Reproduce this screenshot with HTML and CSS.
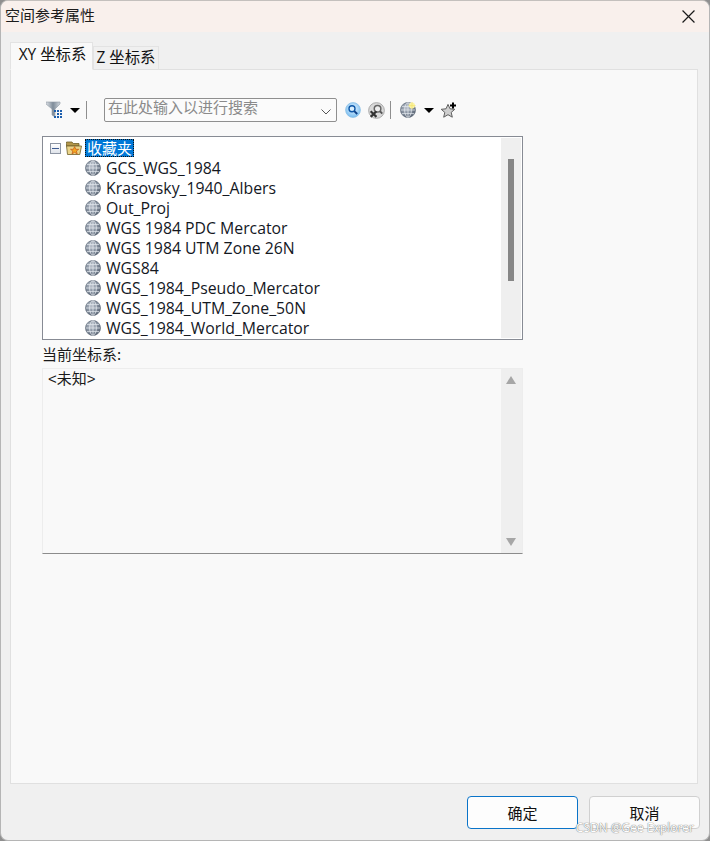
FILE: index.html
```html
<!DOCTYPE html>
<html lang="zh-CN">
<head>
<meta charset="utf-8">
<title>空间参考属性</title>
<link rel="stylesheet" href="styles.css">
</head>
<body>
<svg class="defs" width="0" height="0" aria-hidden="true">
  <defs>
    <radialGradient id="gb" cx="40%" cy="35%" r="70%">
      <stop offset="0" stop-color="#b9c0ca"/><stop offset="0.6" stop-color="#7f8a99"/><stop offset="1" stop-color="#525c6c"/>
    </radialGradient>
    <symbol id="globe" viewBox="0 0 16 16">
      <circle cx="8" cy="8" r="7.5" fill="url(#gb)" stroke="#6d7785" stroke-width="0.8"/>
      <g fill="none" stroke="#e6eaef" stroke-width="0.75">
        <ellipse cx="8" cy="8" rx="3.4" ry="7.2"/>
        <path d="M8 .8V15.2M.9 8H15.1M1.9 4.4H14.1M1.9 11.6H14.1"/>
      </g>
    </symbol>
  </defs>
</svg>
<div class="window">
  <header class="titlebar">
    <span class="title">空间参考属性</span>
    <svg class="close" viewBox="0 0 12 12"><path d="M.5.5 11.5 11.5M11.5.5.5 11.5" stroke="#1a1a1a" stroke-width="1.1" fill="none"/></svg>
  </header>
  <nav class="tabs">
    <div class="tab active">XY 坐标系</div>
    <div class="tab">Z 坐标系</div>
  </nav>
  <main class="panel">
    <div class="toolbar">
      <svg class="ico-filter" viewBox="0 0 16 18">
        <defs><linearGradient id="fn" x1="0" x2="1"><stop offset="0" stop-color="#dfe3e8"/><stop offset="0.5" stop-color="#7f8c99"/><stop offset="1" stop-color="#cfd5db"/></linearGradient></defs>
        <path d="M0 1H14V3L9 8V16L6 14V8L0 3Z" fill="url(#fn)" stroke="#8d98a2" stroke-width=".6"/>
        <path d="M8 9h2v2H8zM11 9h2v2h-2zM14 9h2v2h-2zM11 12h2v2h-2zM14 12h2v2h-2zM8 15h2v2H8zM11 15h2v2h-2zM14 15h2v2h-2z" fill="#1d5fae"/>
      </svg>
      <span class="caret caret-filter"></span>
      <span class="sep sep-a"></span>
      <div class="combo">
        <span class="placeholder">在此处输入以进行搜索</span>
        <svg class="chev" viewBox="0 0 10 6"><path d="M.5.5 5 5 9.5.5" fill="none" stroke="#555" stroke-width="1"/></svg>
      </div>
      <svg class="ico-search" viewBox="0 0 16 16">
        <defs><radialGradient id="sb" cx="50%" cy="40%" r="60%"><stop offset="0" stop-color="#e8f5ff"/><stop offset="1" stop-color="#79bdf0"/></radialGradient></defs>
        <circle cx="8" cy="8" r="7.4" fill="url(#sb)" stroke="#8cc0e6" stroke-width=".8"/>
        <circle cx="7" cy="6.8" r="3" fill="#d9eefc" stroke="#0e58a8" stroke-width="1.4"/>
        <path d="M9.3 9.1 12.2 12" stroke="#0e3f86" stroke-width="1.9"/>
      </svg>
      <svg class="ico-clear" viewBox="0 0 16 16">
        <circle cx="8" cy="8" r="7.4" fill="#d9d9d9" stroke="#9f9f9f" stroke-width=".8"/>
        <circle cx="9" cy="6.4" r="3.1" fill="#eee" stroke="#666" stroke-width="1.4"/>
        <path d="M11.4 8.9 13.4 11" stroke="#555" stroke-width="1.8"/>
        <path d="M2.5 8.6 8 14M8 8.6 2.5 14" stroke="#333" stroke-width="2"/>
      </svg>
      <span class="sep sep-b"></span>
      <svg class="ico-globe" viewBox="0 0 16 16">
        <use href="#globe"/>
        <circle cx="12" cy="3.6" r="3" fill="#fbf3a6"/>
        <path d="M12 0V7.2M8.4 3.6H15.6" stroke="#f4e46c" stroke-width=".7"/>
      </svg>
      <span class="caret caret-globe"></span>
      <svg class="ico-star" viewBox="0 0 16 16">
        <path d="M7 2.4 9 6.8 13.8 7.3 10.2 10.4 11.3 15.2 7 12.7 2.7 15.2 3.8 10.4.2 7.3 5 6.8Z" fill="#cfcfcf" stroke="#5f5f5f" stroke-width="1"/>
        <path d="M12 .5V6.5M9 3.5H15" stroke="#000" stroke-width="2"/>
      </svg>
    </div>

    <section class="tree">
      <div class="tree-list">
        <div class="row root">
          <span class="expander"><span class="minus"></span></span>
          <svg class="ico-folder" viewBox="0 0 16 14">
            <path d="M.5 2.5V1H6L7.2 2.5H13V5H.5Z" fill="#b3964a" stroke="#6e6028" stroke-width=".8"/>
            <path d="M.5 5H15.5L13.8 13.5H1.5Z" fill="#ead48a" stroke="#6e6028" stroke-width=".8"/>
            <path d="M8.6 5.6 9.8 8.3H12.7L10.4 10 11.2 13 8.6 11.3 6 13 6.8 10 4.5 8.3H7.4Z" fill="#f6a81f" stroke="#c2541a" stroke-width=".7"/>
          </svg>
          <span class="selected">收藏夹</span>
        </div>
        <div class="row item"><svg class="ico-item"><use href="#globe"/></svg><span>GCS_WGS_1984</span></div>
        <div class="row item"><svg class="ico-item"><use href="#globe"/></svg><span>Krasovsky_1940_Albers</span></div>
        <div class="row item"><svg class="ico-item"><use href="#globe"/></svg><span>Out_Proj</span></div>
        <div class="row item"><svg class="ico-item"><use href="#globe"/></svg><span>WGS 1984 PDC Mercator</span></div>
        <div class="row item"><svg class="ico-item"><use href="#globe"/></svg><span>WGS 1984 UTM Zone 26N</span></div>
        <div class="row item"><svg class="ico-item"><use href="#globe"/></svg><span>WGS84</span></div>
        <div class="row item"><svg class="ico-item"><use href="#globe"/></svg><span>WGS_1984_Pseudo_Mercator</span></div>
        <div class="row item"><svg class="ico-item"><use href="#globe"/></svg><span>WGS_1984_UTM_Zone_50N</span></div>
        <div class="row item"><svg class="ico-item"><use href="#globe"/></svg><span>WGS_1984_World_Mercator</span></div>
      </div>
      <div class="tree-scroll"><div class="thumb"></div></div>
    </section>

    <div class="label">当前坐标系:</div>

    <section class="info">
      <div class="info-text">&lt;未知&gt;</div>
      <div class="info-scroll">
        <span class="arrow up"></span>
        <span class="arrow down"></span>
      </div>
    </section>
  </main>
  <footer class="footer">
    <button class="btn primary" type="button">确定</button>
    <button class="btn" type="button">取消</button>
  </footer>
  <div class="watermark">CSDN @Gee Explorer</div>
</div>
</body>
</html>
```
FILE: styles.css
```css
* { box-sizing: border-box; }
html, body { margin: 0; padding: 0; height: 100%; background: #8f8f8f; }
body { font-family: "Open Sans", "Noto Sans CJK SC", sans-serif; font-size: 15px; color: #111; overflow: hidden; }
.defs { position: absolute; }

.window {
  position: relative;
  width: 710px;
  height: 841px;
  display: flex;
  flex-direction: column;
  background: #f0f0f0;
  border-radius: 8px;
  border: 1px solid #b5b5b5;
  border-top-color: #c4c0bd;
  overflow: hidden;
}

.titlebar {
  height: 31px;
  flex: none;
  background: #f9f0ec;
  display: flex;
  align-items: center;
  justify-content: space-between;
  padding: 0 14px 0 4px;
}
.title { font-family: "Noto Sans CJK SC", sans-serif; font-size: 15px; line-height: 26px; margin-bottom: 3px; color: #1c1c1c; }
.close { width: 13px; height: 13px; margin-bottom: 1px; }

.tabs {
  display: flex;
  align-items: flex-end;
  height: 38px;
  flex: none;
  padding: 10px 0 0 9px;
  position: relative;
  z-index: 1;
  margin-bottom: -1px;
}
.tab {
  height: 24px;
  width: 66px;
  background: #f0f0f0;
  border: 1px solid #e3e3e3;
  border-bottom-color: #e0e0e0;
  display: flex;
  align-items: center;
  justify-content: center;
  font-size: 15.4px;
  line-height: 20px;
}
.tab.active {
  height: 28px;
  width: 83px;
  background: #f9f9f9;
  border-bottom-color: #f9f9f9;
  padding-bottom: 2px;
  padding-left: 2px;
}

.panel {
  flex: 1;
  min-height: 0;
  margin: 0 11px 0 9px;
  background: #f9f9f9;
  border: 1px solid #e0e0e0;
  padding: 28px 0 0 31px;
}

.toolbar {
  display: flex;
  align-items: center;
  height: 24px;
  margin-bottom: 14px;
}
.ico-filter { width: 16px; height: 18px; margin-left: 4px; }
.caret { width: 0; height: 0; border-left: 5px solid transparent; border-right: 5px solid transparent; border-top: 5px solid #000; }
.caret-filter { margin-left: 8px; }
.sep { width: 1px; height: 18px; background: #8e8e8e; }
.sep-a { margin-left: 6px; }
.combo {
  width: 233px;
  height: 24px;
  margin-left: 17px;
  border: 1px solid #8f8f8f;
  border-radius: 2px;
  background: #fbfbfb;
  display: flex;
  align-items: center;
  justify-content: space-between;
  padding: 0 5px 0 3px;
}
.placeholder { font-family: "Noto Sans CJK SC", sans-serif; font-size: 15px; line-height: 18px; color: #8a8a8a; padding-bottom: 6px; }
.chev { width: 10px; height: 6px; margin-top: 3px; }
.ico-search { width: 16px; height: 16px; margin-left: 8px; }
.ico-clear { width: 17px; height: 17px; margin-left: 7px; }
.sep-b { margin-left: 5px; }
.ico-globe { width: 16px; height: 16px; margin-left: 9px; }
.caret-globe { margin-left: 8px; }
.ico-star { width: 16px; height: 16px; margin-left: 7px; }

.tree {
  width: 481px;
  height: 204px;
  border: 1px solid #878b94;
  background: #fff;
  display: flex;
  overflow: hidden;
}
.tree-list { flex: 1; padding-top: 1px; }
.row { height: 20px; display: flex; align-items: center; white-space: nowrap; line-height: 20px; }
.root { padding-left: 7px; }
.expander {
  width: 11px;
  height: 11px;
  border: 1px solid #8d95a3;
  background: linear-gradient(#fff, #dfe3ea);
  display: flex;
  align-items: center;
  justify-content: center;
}
.minus { width: 7px; height: 1px; background: #3f5c92; }
.ico-folder { width: 16px; height: 14px; margin-left: 5px; }
.selected {
  margin-left: 3px;
  width: 49px;
  height: 18px;
  background: #0078d7;
  color: #fff;
  outline: 1px dotted #111;
  outline-offset: -1px;
  font-family: "Noto Sans CJK SC", sans-serif;
  font-size: 15px;
  line-height: 18px;
  text-align: center;
}
.item { padding-left: 42px; font-size: 15.8px; color: #14181f; }
.ico-item { width: 16px; height: 16px; margin-right: 5px; flex: none; }
.tree-scroll {
  width: 20px;
  height: 200px;
  margin: 1px 1px 0 0;
  background: #efefef;
  padding: 21px 0 0 7px;
}
.thumb { width: 6px; height: 122px; background: #868686; }

.label { margin-top: 4px; height: 24px; line-height: 19px; font-family: "Noto Sans CJK SC", sans-serif; font-size: 15px; color: #1a1a1a; }

.info {
  width: 481px;
  height: 186px;
  border: 1px solid #ededed;
  border-bottom: 1px solid #8c8c8c;
  background: #f9f9f9;
  display: flex;
}
.info-text { flex: 1; padding: 0 0 0 5px; line-height: 20px; font-family: "Liberation Sans", "Noto Sans CJK SC", sans-serif; font-size: 15px; color: #1a1a1a; }
.info-scroll {
  width: 21px;
  background: #efefef;
  display: flex;
  flex-direction: column;
  justify-content: space-between;
  align-items: flex-start;
  padding: 7px 0 7px 4.5px;
}
.arrow { width: 0; height: 0; border-left: 5px solid transparent; border-right: 5px solid transparent; }
.arrow.up { border-bottom: 8px solid #a6a6a6; }
.arrow.down { border-top: 8px solid #a6a6a6; }

.footer {
  flex: none;
  height: 56px;
  display: flex;
  justify-content: flex-end;
  gap: 11px;
  padding: 12px 9px 0 0;
}
.btn {
  width: 111px;
  height: 33px;
  border: 1px solid #d0d0d0;
  border-radius: 4px;
  background: #fbfbfb;
  font-family: "Noto Sans CJK SC", sans-serif;
  font-size: 15px;
  color: #111;
  padding: 0;
}
.btn.primary { border: 1px solid #0a74c9; background: #fdfdfd; }

.watermark {
  position: absolute;
  right: 15px;
  bottom: 4px;
  font-family: "Open Sans", sans-serif;
  font-size: 12px;
  line-height: 16px;
  color: #fff;
  text-shadow: 0 0 1px #777, 0 0 1px #777;
  white-space: nowrap;
}
```
